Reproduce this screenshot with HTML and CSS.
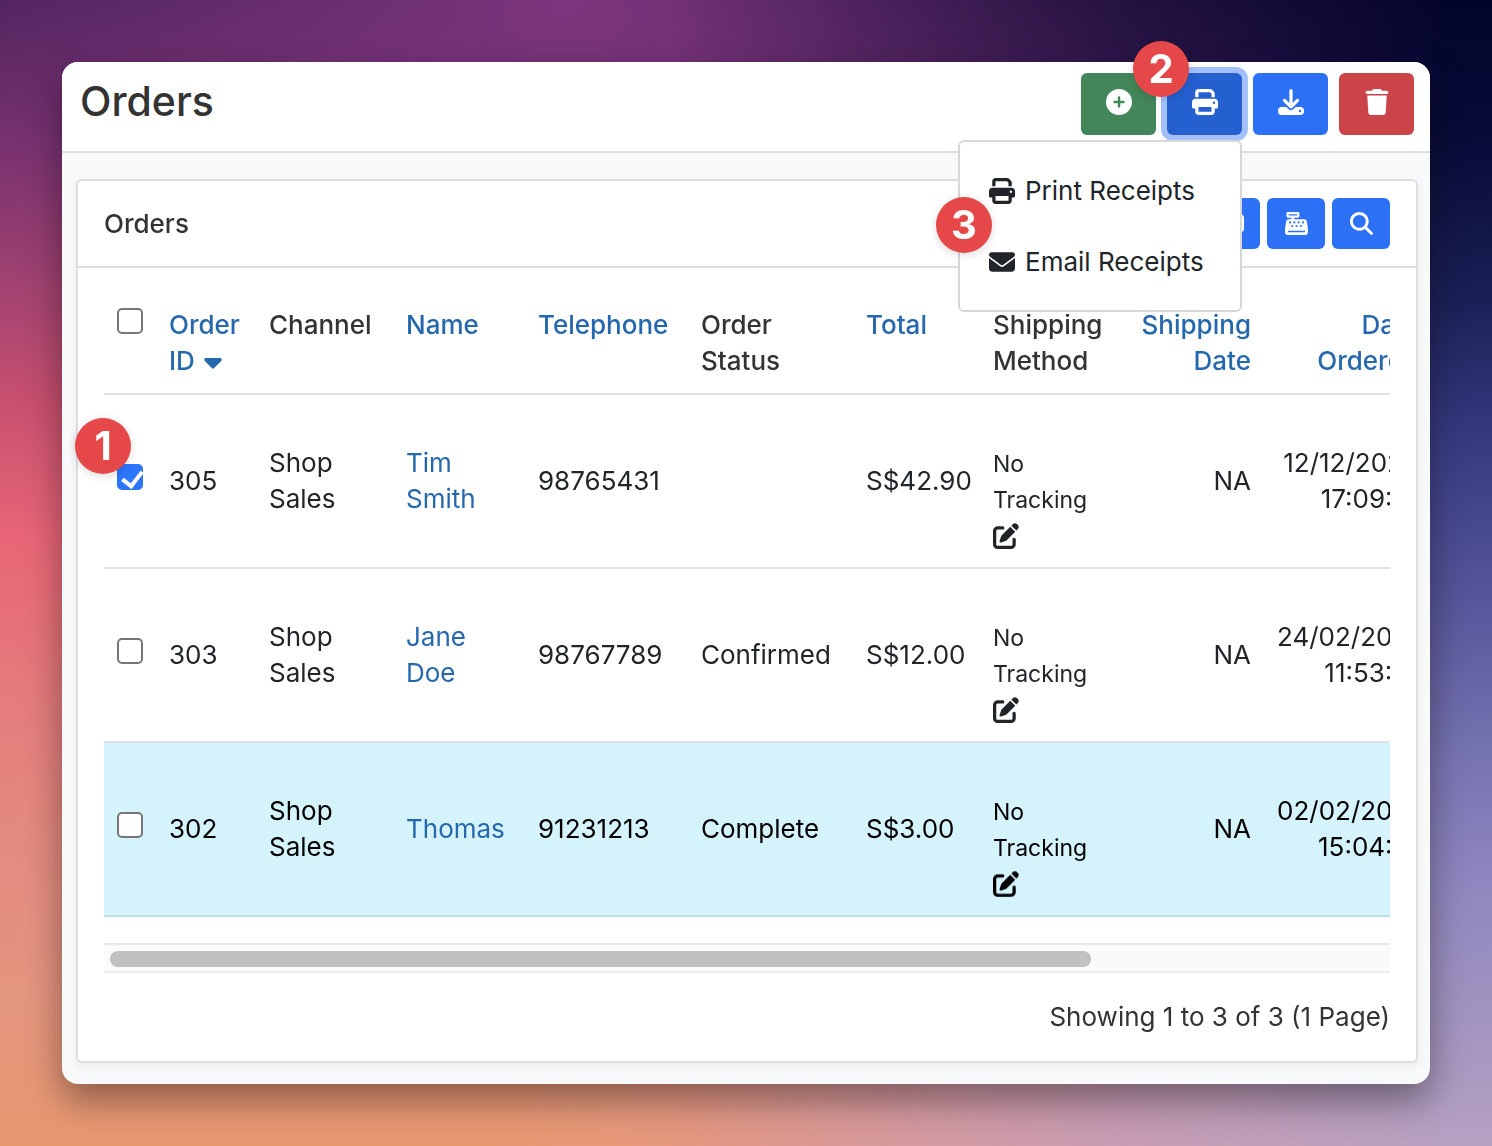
FILE: index.html
```html
<!DOCTYPE html>
<html lang="en">
<head>
    <meta charset="UTF-8">
    <title>Orders</title>
    <link rel="stylesheet" href="styles.css">
</head>
<body>
    <!-- shared icons -->
    <svg class="icon-defs" aria-hidden="true">
        <symbol id="icon-print" viewBox="0 0 512 512">
            <path d="M128 0C92.700 0 64 28.700 64 64v96h64V64h226.700L384 93.300V160h64V93.300c0-17-6.700-33.300-18.700-45.300L400 18.700C388 6.700 371.700 0 354.700 0H128zM384 352v96H128v-96h256zm64 32h32c17.700 0 32-14.300 32-32v-96c0-35.300-28.700-64-64-64H64c-35.300 0-64 28.700-64 64v96c0 17.700 14.300 32 32 32h32v64c0 35.300 28.700 64 64 64h256c35.300 0 64-28.700 64-64v-64zM432 248a24 24 0 1 1 0 48 24 24 0 1 1 0-48z"/>
        </symbol>
        <symbol id="icon-edit" viewBox="0 0 512 512">
            <path d="M471.600 21.700c-21.900-21.900-57.300-21.900-79.200 0L362.300 51.700l97.900 97.900 30.100-30.100c21.900-21.900 21.900-57.300 0-79.200L471.600 21.700zm-299.200 220c-6.100 6.100-10.800 13.600-13.500 21.900l-29.600 88.800c-2.900 8.600-.6 18.100 5.800 24.600s15.900 8.700 24.600 5.800l88.800-29.600c8.200-2.700 15.700-7.400 21.900-13.500L437.700 172.300 339.700 74.300 172.400 241.700zM96 64c-53 0-96 43-96 96v256c0 53 43 96 96 96h256c53 0 96-43 96-96v-96c0-17.700-14.300-32-32-32s-32 14.300-32 32v96c0 17.700-14.300 32-32 32H96c-17.700 0-32-14.300-32-32V160c0-17.700 14.300-32 32-32h96c17.700 0 32-14.300 32-32s-14.300-32-32-32H96z"/>
        </symbol>
    </svg>

    <div class="window">
        <header class="page-header">
            <h1>Orders</h1>
            <div class="actions">
                <button class="btn btn-add" aria-label="Add new">
                    <svg class="icon" viewBox="0 0 512 512"><path d="M256 512a256 256 0 1 0 0-512 256 256 0 1 0 0 512zM232 344v-64h-64c-13.300 0-24-10.700-24-24s10.700-24 24-24h64v-64c0-13.300 10.700-24 24-24s24 10.700 24 24v64h64c13.300 0 24 10.700 24 24s-10.700 24-24 24h-64v64c0 13.300-10.700 24-24 24s-24-10.700-24-24z"/></svg>
                </button>
                <div class="dropdown">
                    <button class="btn btn-print" aria-label="Print" aria-expanded="true">
                        <svg class="icon"><use href="#icon-print"/></svg>
                    </button>
                    <div class="dropdown-menu">
                        <a href="#" class="dropdown-item"><svg class="icon"><use href="#icon-print"/></svg> Print Receipts</a>
                        <a href="#" class="dropdown-item"><svg class="icon" viewBox="0 0 512 512"><path d="M48 64C21.500 64 0 85.500 0 112c0 15.100 7.100 29.300 19.200 38.400l217.600 163.200c11.400 8.500 27 8.500 38.400 0l217.600-163.200c12.100-9.100 19.200-23.300 19.200-38.400 0-26.500-21.500-48-48-48H48zM0 176v208c0 35.300 28.700 64 64 64h384c35.300 0 64-28.700 64-64V176L294.400 339.200c-22.800 17.100-54 17.100-76.800 0L0 176z"/></svg> Email Receipts</a>
                        <span class="step step-3">3</span>
                    </div>
                    <span class="step step-2">2</span>
                </div>
                <button class="btn btn-blue" aria-label="Download">
                    <svg class="icon" viewBox="0 0 512 512"><path d="M288 32c0-17.700-14.300-32-32-32s-32 14.300-32 32v242.700l-73.400-73.400c-12.500-12.500-32.800-12.500-45.300 0s-12.500 32.800 0 45.300l128 128c12.500 12.500 32.800 12.500 45.300 0l128-128c12.500-12.500 12.500-32.800 0-45.300s-32.800-12.500-45.300 0L288 274.700V32zM64 352c-35.300 0-64 28.700-64 64v32c0 35.300 28.700 64 64 64h384c35.300 0 64-28.700 64-64v-32c0-35.300-28.700-64-64-64H346.500l-45.300 45.300c-25 25-65.500 25-90.500 0L165.500 352H64zm368 56a24 24 0 1 1 0 48 24 24 0 1 1 0-48z"/></svg>
                </button>
                <button class="btn btn-delete" aria-label="Delete">
                    <svg class="icon" viewBox="0 0 448 512"><path d="M135.200 17.700L128 32H32C14.300 32 0 46.300 0 64s14.300 32 32 32h384c17.700 0 32-14.300 32-32s-14.300-32-32-32h-96l-7.200-14.300C307.400 6.800 296.300 0 284.200 0H163.800c-12.100 0-23.200 6.800-28.600 17.700zM416 128H32l21.200 339c1.600 25.300 22.600 45 47.900 45h245.800c25.300 0 46.300-19.700 47.900-45L416 128z"/></svg>
                </button>
            </div>
        </header>

        <main class="card">
            <span class="step step-1">1</span>
            <div class="card-header">
                <h2>Orders</h2>
                <div class="tools">
                    <button class="btn btn-blue btn-sm" aria-label="View">
                        <svg class="icon icon-wide" viewBox="0 0 512 512"><path fill-rule="evenodd" d="M64 64h384c35 0 64 29 64 64v224c0 35-29 64-64 64H64c-35 0-64-29-64-64V128c0-35 29-64 64-64zm0 48v256h384V112z"/></svg>
                    </button>
                    <button class="btn btn-blue btn-sm" aria-label="Point of sale">
                        <svg class="icon" viewBox="0 0 512 512"><path fill-rule="evenodd" d="M64 0C46 0 32 14 32 32v64c0 18 14 32 32 32h80v32H87c-32 0-59 23-63 55L1 376c-1 5-1 9-1 14v58c0 35 29 64 64 64h384c35 0 64-29 64-64v-58c0-5 0-9-1-14l-23-161c-4-32-31-55-63-55H208v-32h80c18 0 32-14 32-32V32c0-18-14-32-32-32H64zm32 48h160c9 0 16 7 16 16s-7 16-16 16H96c-9 0-16-7-16-16s7-16 16-16zM64 432c0-9 7-16 16-16h352c9 0 16 7 16 16s-7 16-16 16H80c-9 0-16-7-16-16zM112 208a24 24 0 1 1 0 48 24 24 0 1 1 0-48zm96 0a24 24 0 1 1 0 48 24 24 0 1 1 0-48zm96 0a24 24 0 1 1 0 48 24 24 0 1 1 0-48zm96 0a24 24 0 1 1 0 48 24 24 0 1 1 0-48zM160 288a24 24 0 1 1 0 48 24 24 0 1 1 0-48zm96 0a24 24 0 1 1 0 48 24 24 0 1 1 0-48zm96 0a24 24 0 1 1 0 48 24 24 0 1 1 0-48z"/></svg>
                    </button>
                    <button class="btn btn-blue btn-sm" aria-label="Search">
                        <svg class="icon" viewBox="0 0 512 512"><path d="M416 208c0 45.900-14.900 88.300-40 122.700l126.600 126.700c12.500 12.500 12.500 32.800 0 45.300s-32.800 12.500-45.300 0L330.700 376c-34.400 25.200-76.800 40-122.700 40C93.100 416 0 322.900 0 208S93.100 0 208 0s208 93.100 208 208zM208 352a144 144 0 1 0 0-288 144 144 0 1 0 0 288z"/></svg>
                    </button>
                </div>
            </div>

            <div class="card-body">
                <div class="table-scroll">
                    <table>
                        <colgroup>
                            <col class="col-check">
                            <col class="col-id">
                            <col class="col-channel">
                            <col class="col-name">
                            <col class="col-phone">
                            <col class="col-status">
                            <col class="col-total">
                            <col class="col-method">
                            <col class="col-shipping">
                            <col class="col-ordered">
                        </colgroup>
                        <thead>
                            <tr>
                                <th><input type="checkbox" aria-label="Select all orders"></th>
                                <th><a href="#">Order ID <svg class="caret" viewBox="0 0 18 12"><path d="M2 1h14c1.600 0 2.300 1.800 1.200 2.900l-7 7a1.700 1.700 0 0 1-2.400 0l-7-7C-.3 2.800.4 1 2 1z"/></svg></a></th>
                                <th>Channel</th>
                                <th><a href="#">Name</a></th>
                                <th><a href="#">Telephone</a></th>
                                <th>Order Status</th>
                                <th><a href="#">Total</a></th>
                                <th>Shipping Method</th>
                                <th class="right"><a href="#">Shipping Date</a></th>
                                <th class="right"><a href="#">Date Ordered</a></th>
                            </tr>
                        </thead>
                        <tbody>
                            <tr>
                                <td><input type="checkbox" aria-label="Select order 305" checked></td>
                                <td>305</td>
                                <td>Shop Sales</td>
                                <td class="name"><a href="#">Tim Smith</a></td>
                                <td>98765431</td>
                                <td></td>
                                <td>S$42.90</td>
                                <td class="method">No Tracking<br><a href="#" aria-label="Edit tracking"><svg class="icon"><use href="#icon-edit"/></svg></a></td>
                                <td class="right">NA</td>
                                <td class="right">12/12/2023 17:09:51</td>
                            </tr>
                            <tr>
                                <td><input type="checkbox" aria-label="Select order 303"></td>
                                <td>303</td>
                                <td>Shop Sales</td>
                                <td class="name"><a href="#">Jane Doe</a></td>
                                <td>98767789</td>
                                <td>Confirmed</td>
                                <td>S$12.00</td>
                                <td class="method">No Tracking<br><a href="#" aria-label="Edit tracking"><svg class="icon"><use href="#icon-edit"/></svg></a></td>
                                <td class="right">NA</td>
                                <td class="right">24/02/2023 11:53:31</td>
                            </tr>
                            <tr class="complete">
                                <td><input type="checkbox" aria-label="Select order 302"></td>
                                <td>302</td>
                                <td>Shop Sales</td>
                                <td class="name"><a href="#">Thomas</a></td>
                                <td>91231213</td>
                                <td>Complete</td>
                                <td>S$3.00</td>
                                <td class="method">No Tracking<br><a href="#" aria-label="Edit tracking"><svg class="icon"><use href="#icon-edit"/></svg></a></td>
                                <td class="right">NA</td>
                                <td class="right">02/02/2023 15:04:51</td>
                            </tr>
                        </tbody>
                    </table>
                </div>
                <div class="scrollbar"><div class="scroll-thumb"></div></div>
                <p class="results">Showing 1 to 3 of 3 (1 Page)</p>
            </div>
        </main>
    </div>
</body>
</html>
```
FILE: styles.css
```css
* {
    box-sizing: border-box;
}

body {
    margin: 0;
    padding: 62px;
    min-height: 100vh;
    font-family: Inter, "Liberation Sans", sans-serif;
    font-size: 26px;
    line-height: 36px;
    color: #212529;
    background:
        radial-gradient(ellipse 40% 35% at 38% 0%, #7c357c 0%, transparent 100%),
        radial-gradient(ellipse 45% 30% at 78% 100%, #e096a2 0%, transparent 100%),
        linear-gradient(#50245f 0%, #76316f 12%, #a54471 26%, #c8506f 35%, #e86677 47%, #e57c7c 61%, #e38b80 74%, #e4957f 87%, #e8986f 100%);
}

/* night sky fading in from the right */
body::before {
    content: "";
    position: fixed;
    inset: 0;
    z-index: -1;
    background: linear-gradient(#03042c 0%, #080b38 12%, #1a2056 26%, #353a80 38%, #55559a 52%, #7774b2 66%, #9188c0 78%, #a093c0 88%, #b6a1c2 100%);
    mask-image: linear-gradient(to right, transparent 45%, black 97%);
}

h1,
h2,
p {
    margin: 0;
}

a {
    color: #2568ae;
    text-decoration: none;
}

.icon-defs {
    display: none;
}

.icon {
    display: block;
    width: 26px;
    height: 26px;
    fill: currentColor;
}

.window {
    background: #f8f9fb;
    border-radius: 16px;
    padding-bottom: 21px;
    box-shadow: 0 16px 36px rgba(0, 0, 0, 0.4);
}

.page-header {
    display: flex;
    justify-content: space-between;
    padding: 11px 16px 16px 18px;
    background: white;
    border-bottom: 2px solid #dcdee0;
    border-radius: 16px 16px 0 0;
}

.page-header h1 {
    font-size: 41px;
    line-height: 56px;
    font-weight: 500;
    color: #333;
}

.actions {
    display: flex;
    gap: 11px;
}

.btn {
    display: flex;
    justify-content: center;
    width: 75px;
    height: 62px;
    padding: 16px 0 0;
    border: none;
    border-radius: 6px;
    color: white;
    cursor: pointer;
}

.btn-add {
    background: #438659;
}

.btn-blue {
    background: #2b70f5;
}

.btn-delete {
    background: #cb444a;
}

.btn-print {
    background: #2460d0;
    box-shadow: 0 0 0 6px #a3c0fb;
}

.btn-sm {
    align-items: center;
    width: 58px;
    height: 51px;
    padding: 0;
}

.btn-sm .icon {
    width: 23px;
    height: 23px;
}

.btn-sm .icon-wide {
    width: 26px;
    height: 26px;
}

.dropdown {
    position: relative;
}

.dropdown-menu {
    position: absolute;
    top: calc(100% + 5px);
    right: 0;
    z-index: 2;
    width: 284px;
    padding: 13px 0;
    background: white;
    border: 2px solid #d6d7d8;
    border-radius: 6px;
}

.dropdown-item {
    display: flex;
    align-items: center;
    gap: 10px;
    padding: 18px 0 17px 29px;
    color: #212529;
    white-space: nowrap;
}

/* numbered step markers */
.step {
    position: absolute;
    z-index: 3;
    width: 56px;
    height: 56px;
    border-radius: 50%;
    background: #e64748;
    color: white;
    font-size: 40px;
    line-height: 56px;
    font-weight: 700;
    text-align: center;
    box-shadow: 0 2px 8px rgba(0, 0, 0, 0.15);
}

.step-1 {
    top: 237px;
    left: -3px;
}

.step-2 {
    top: -32px;
    left: -34px;
}

.step-3 {
    top: 55px;
    left: -24px;
}

.card {
    position: relative;
    margin: 26px 12px 0 14px;
    background: white;
    border: 2px solid #dcdee0;
    border-radius: 6px;
    box-shadow: 0 4px 10px rgba(0, 0, 0, 0.06);
}

.card-header {
    display: flex;
    justify-content: space-between;
    align-items: center;
    padding: 17px 26px;
    border-bottom: 2px solid #dcdee0;
}

.card-header h2 {
    font-size: 26px;
    font-weight: 500;
    color: #333;
}

.tools {
    display: flex;
    gap: 7px;
}

.card-body {
    padding: 26px;
}

.table-scroll {
    overflow-x: auto;
    scrollbar-width: none;
}

table {
    table-layout: fixed;
    width: 1328px;
    border-collapse: separate;
    border-spacing: 0;
}

.col-check { width: 52px; }
.col-id { width: 100px; }
.col-channel { width: 137px; }
.col-name { width: 132px; }
.col-phone { width: 163px; }
.col-status { width: 165px; }
.col-total { width: 127px; }
.col-method { width: 142px; }
.col-shipping { width: 142px; }
.col-ordered { width: 168px; }

th,
td {
    padding: 13px 0 13px 13px;
    border-bottom: 2px solid #dee2e6;
    text-align: left;
}

th {
    padding-bottom: 14px;
    vertical-align: top;
    font-weight: 500;
    color: #333;
}

td {
    height: 174px;
    vertical-align: middle;
}

.right {
    padding-right: 13px;
    text-align: right;
}

.name {
    padding-right: 13px;
}

.caret {
    width: 18px;
    height: 12px;
    margin-left: 2px;
    vertical-align: 1px;
    fill: currentColor;
}

input[type="checkbox"] {
    appearance: none;
    display: block;
    width: 26px;
    height: 26px;
    margin: 1px 0 9px;
    background: white;
    border: 2px solid #767676;
    border-radius: 5px;
}

input[type="checkbox"]:checked {
    position: relative;
    background: #2b76fb;
    border-color: #2b76fb;
}

input[type="checkbox"]:checked::after {
    content: "";
    position: absolute;
    top: 1px;
    left: 7px;
    width: 9px;
    height: 16px;
    border: solid white;
    border-width: 0 4px 4px 0;
    transform: rotate(38deg);
}

td.method {
    padding-top: 50px;
    padding-right: 30px;
    font-size: 23px;
}

.method a {
    display: block;
    padding: 5px 0;
    color: inherit;
}

.complete td {
    background: #d5f3fb;
    border-bottom-color: #bbdde4;
    color: #000;
}

.scrollbar {
    margin-top: 26px;
    padding: 6px 6px 4px;
    background: #fafafa;
    border-top: 2px solid #e8e8e8;
    border-bottom: 2px solid #ededed;
}

.scroll-thumb {
    width: 77%;
    height: 16px;
    border-radius: 8px;
    background: #c1c1c1;
}

.results {
    margin-top: 26px;
    text-align: right;
    color: #333;
}
```
